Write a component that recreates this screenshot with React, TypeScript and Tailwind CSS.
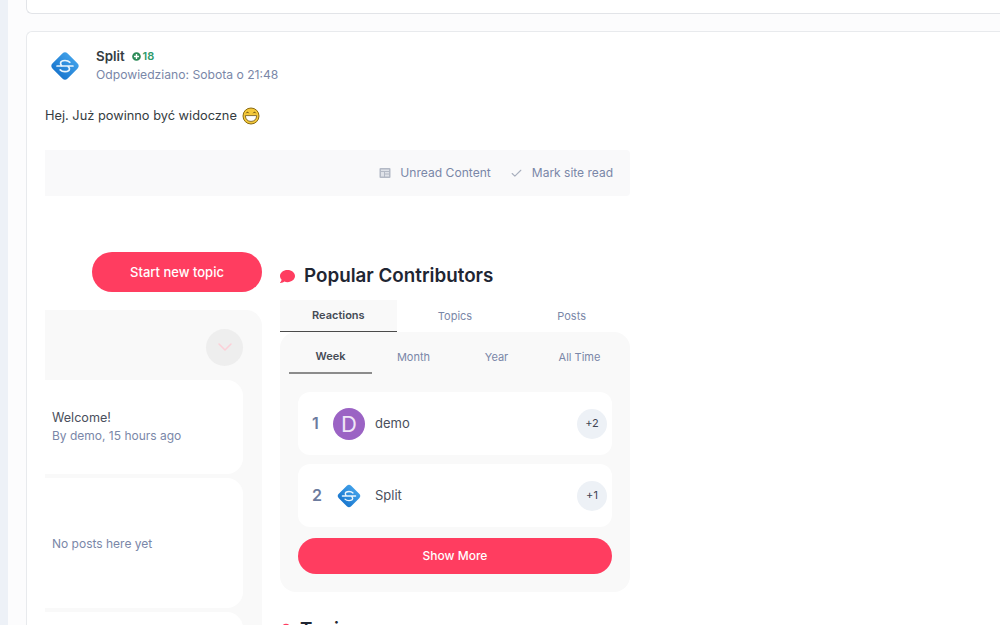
import { Check, ChevronDown } from 'lucide-react';
import { FaComment, FaMapMarker, FaPlusCircle } from 'react-icons/fa';

const SplitLogo = ({ size }: { size: number }) => (
  <svg width={size} height={size} viewBox="0 0 32 32" className="shrink-0">
    <defs>
      <linearGradient id={`split-${size}`} x1="0" y1="0" x2="0" y2="1">
        <stop offset="0" stopColor="#3f9fe8" />
        <stop offset="1" stopColor="#1b78cf" />
      </linearGradient>
    </defs>
    <rect x="6" y="6" width="20" height="20" rx="3.5" transform="rotate(45 16 16)" fill={`url(#split-${size})`} />
    <path
      d="M20.5 12.5c-.9-1-2.5-1.7-4.5-1.7-2.5 0-4.2 1.2-4.2 2.7 0 .9.5 1.6 1.2 2.5M8.5 16h15M19 16.5c.8.7 1.2 1.3 1.2 2.1 0 1.6-1.8 2.7-4.2 2.7-2 0-3.6-.7-4.5-1.7"
      fill="none"
      stroke="#eaf5fd"
      strokeWidth="1.6"
      strokeLinecap="round"
    />
  </svg>
);

const GrinEmoji = () => (
  <svg width="18" height="18" viewBox="0 0 18 18" className="inline-block shrink-0">
    <circle cx="9" cy="9" r="8" fill="#f5c93a" stroke="#8a6a10" strokeWidth="1" />
    <path d="M3.4 8.6h11.2c0 3.8-2.4 5.8-5.6 5.8s-5.6-2-5.6-5.8z" fill="#fff" stroke="#6b5210" strokeWidth="0.8" />
    <path d="M4.2 6.2c.6-1.2 2-1.2 2.6 0M11.2 6.2c.6-1.2 2-1.2 2.6 0" fill="none" stroke="#5c4508" strokeWidth="1" />
  </svg>
);

const UnreadIcon = () => (
  <svg width="12" height="12" viewBox="0 0 12 12" className="shrink-0">
    <rect x="0.5" y="1" width="11" height="10" rx="1" fill="#b3b9c5" />
    <rect x="2" y="2.5" width="8" height="1.5" fill="#dfe2e8" />
    <rect x="2" y="5" width="3" height="4.5" fill="#dfe2e8" />
    <rect x="6" y="5" width="4" height="1.5" fill="#dfe2e8" />
    <rect x="6" y="7.5" width="4" height="2" fill="#dfe2e8" />
  </svg>
);

const ContributorRow = ({ rank, name, score, children }: { rank: number; name: string; score: string; children: React.ReactNode }) => (
  <div className="flex h-[63px] items-center rounded-xl bg-white pl-[14px] pr-[5px]">
    <span className="w-[21px] pb-[1px] text-base font-semibold text-[#6c7b9e]">{rank}</span>
    <div className="flex w-8 justify-center">{children}</div>
    <span className="ml-[10px] flex-1 text-[13px] text-[#4a4f5c]">{name}</span>
    <span className="flex h-[30px] w-[30px] items-center justify-center rounded-full bg-[#edf1f6] text-[11px] text-[#3f4654]">{score}</span>
  </div>
);

export default function App() {
  return (
    <div className="flex h-[625px] w-[1000px] overflow-hidden bg-white font-['Inter',sans-serif]">
      <div className="w-2 shrink-0 bg-[#edf1f7]" />
      <div className="min-w-0 flex-1 bg-[#fcfcfd] pl-[18px]">
        {/* previous post, only its foot is on screen */}
        <div className="h-[14px] rounded-bl-md border-b border-l border-[#e2e4e8] bg-white" />

        <div className="mt-[17px] h-[700px] rounded-tl-md border-l border-t border-[#e8eaed] bg-white pl-[18px]">
          <div className="flex h-[67px] items-center">
            <div className="flex w-[51px] pl-[3px]">
              <SplitLogo size={34} />
            </div>
            <div className="mt-[-1px]">
              <div className="flex items-center gap-[7px] leading-[20px]">
                <span className="text-[13.3px] font-semibold text-[#353c41]">Split</span>
                <span className="flex items-center gap-[2px] text-[11px] font-semibold text-[#2f9a6b]">
                  <FaPlusCircle className="h-[9px] w-[9px] text-[#2b8a57]" />
                  18
                </span>
              </div>
              <div className="text-[12.15px] leading-[18px] text-[#7a87a8]">Odpowiedziano: Sobota o 21:48</div>
            </div>
          </div>

          <p className="mt-[7px] flex h-[20px] items-center gap-[5px] text-[12.8px] text-[#353c41]">
            Hej. Już powinno być widoczne <GrinEmoji />
          </p>

          {/* pasted screenshot */}
          <div className="mt-[24px] w-[585px]">
            <div className="flex h-[46px] items-center justify-end gap-[19px] rounded-r bg-[#f9f9fa] pr-[17px] text-xs text-[#7a87a8]">
              <span className="flex items-center gap-[9px]">
                <UnreadIcon />
                <span className="text-[12.1px]">Unread Content</span>
              </span>
              <span className="flex items-center gap-[9px]">
                <Check className="h-[13px] w-[13px] text-[#a8afbd]" />
                Mark site read
              </span>
            </div>

            <div className="mt-[56px] flex gap-[18px]">
              <div className="w-[217px] shrink-0">
                <div className="ml-[47px] flex h-[40px] w-[170px] items-center justify-center rounded-full bg-[#ff3d60] pt-[1px] text-[13px] font-medium text-white">
                  Start new topic
                </div>
                <div className="mt-[18px] h-[400px] rounded-tr-2xl bg-[#f9f9f9] pr-[19px]">
                  <div className="flex h-[70px] items-center justify-end pt-1">
                    <div className="flex h-[37px] w-[37px] items-center justify-center rounded-full bg-[#eeeeee]">
                      <ChevronDown className="h-6 w-6 text-[#fcd0d8]" strokeWidth={1.5} />
                    </div>
                  </div>
                  <div className="flex h-[94px] flex-col justify-center rounded-r-2xl bg-white pl-[7px]">
                    <div className="text-[12.6px] leading-[18px] text-[#4a4f5c]">Welcome!</div>
                    <div className="text-xs leading-[18px] text-[#7a87a8]">By demo, 15 hours ago</div>
                  </div>
                  <div className="mt-1 flex h-[130px] items-center rounded-r-2xl bg-white pl-[7px] pt-[1px] text-xs text-[#7a87a8]">
                    No posts here yet
                  </div>
                  <div className="mt-1 h-[60px] rounded-r-2xl bg-white" />
                </div>
              </div>

              <div className="w-[350px] shrink-0">
                <div className="flex h-[48px] items-center gap-[9px]">
                  <FaComment className="h-[15px] w-[15px] text-[#ff3d60]" />
                  <h2 className="text-[18.8px] font-semibold text-[#1f2633]">Popular Contributors</h2>
                </div>

                <div className="grid grid-cols-3 text-[11px]">
                  <div className="flex h-[32px] items-center justify-center border-b border-[#4b4b4b] bg-[#f9f9f9] font-semibold text-[#454b55]">Reactions</div>
                  <div className="flex h-[32px] items-center justify-center text-[#7a87a8]">Topics</div>
                  <div className="flex h-[32px] items-center justify-center text-[#7a87a8]">Posts</div>
                </div>

                <div className="h-[260px] rounded-2xl bg-[#f9f9f9] px-[9px] pt-[8px]">
                  <div className="grid grid-cols-4 text-[11px]">
                    <div className="flex h-[34px] items-center justify-center border-b-2 border-[#8c8c8c] pt-[1px] font-semibold text-[#454b55]">Week</div>
                    <div className="flex h-[34px] items-center justify-center pt-[1px] text-[#7a87a8]">Month</div>
                    <div className="flex h-[34px] items-center justify-center pt-[1px] text-[#7a87a8]">Year</div>
                    <div className="flex h-[34px] items-center justify-center pt-[1px] text-[#7a87a8]">All Time</div>
                  </div>
                  <div className="mt-[18px] flex flex-col gap-[9px] pl-[9px] pr-[9px]">
                    <ContributorRow rank={1} name="demo" score="+2">
                      <div className="flex h-8 w-8 items-center justify-center rounded-full bg-[#9b63c4] text-[22px] leading-none text-[#f0e6f7]">D</div>
                    </ContributorRow>
                    <ContributorRow rank={2} name="Split" score="+1">
                      <SplitLogo size={28} />
                    </ContributorRow>
                    <div className="mt-[2px] flex h-[36px] items-center justify-center rounded-full bg-[#ff3d60] text-xs font-medium text-white">
                      Show More
                    </div>
                  </div>
                </div>

                <div className="mt-[24px] flex items-center gap-[9px] pl-[1px]">
                  <FaMapMarker className="h-[15px] w-[10px] text-[#ff3d60]" />
                  <h2 className="text-[18.8px] font-semibold text-[#1f2633]">Topics</h2>
                </div>
              </div>
            </div>
          </div>
        </div>
      </div>
    </div>
  );
}
